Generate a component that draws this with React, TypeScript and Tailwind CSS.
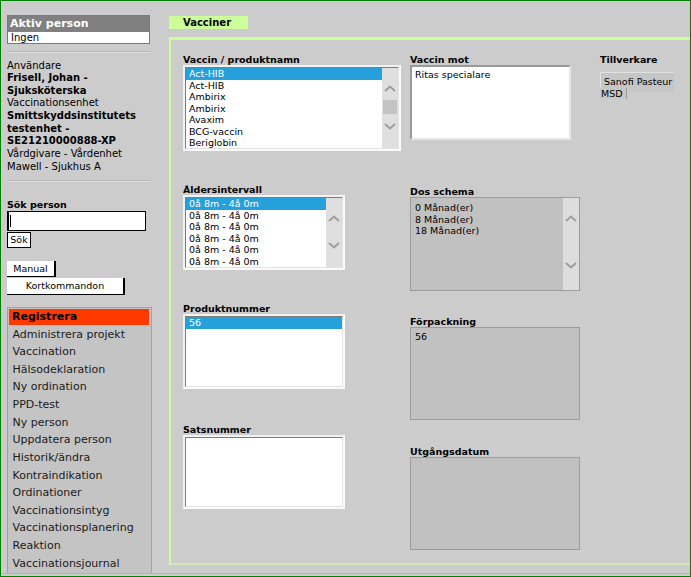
import React from "react";

function Chevron({ dir }: { dir: "up" | "down" }) {
  return (
    <svg width="12" height="7" viewBox="0 0 12 7" className="block">
      <polyline
        points={dir === "up" ? "1,6 6,1.5 11,6" : "1,1 6,5.5 11,1"}
        fill="none"
        stroke="#9c9c9c"
        strokeWidth="1.8"
      />
    </svg>
  );
}

function ListBox({
  size,
  items,
  selected = 0,
  scroll,
}: {
  size: string;
  items: string[];
  selected?: number;
  scroll?: React.ReactNode;
}) {
  return (
    <div className={`${size} border-2 border-[#f2f2f2] border-b-[#fbfbfb] border-r-[#fbfbfb]`}>
      <div className="h-full flex bg-white border border-t-[#7c7c7c] border-l-[#7c7c7c] border-b-[#e2e2e2] border-r-[#e2e2e2]">
        <div className="flex-1 text-[9.5px] leading-[11.5px] whitespace-nowrap overflow-hidden">
          {items.map((t, i) => (
            <div key={i} className={i === selected ? "bg-[#26a0da] text-white pl-[3px]" : "pl-[3px] text-black"}>
              {t}
            </div>
          ))}
        </div>
        {scroll}
      </div>
    </div>
  );
}

function Label({ children, className = "" }: { children: React.ReactNode; className?: string }) {
  return <div className={`text-[9.5px] font-bold leading-[11px] whitespace-nowrap ${className}`}>{children}</div>;
}

function GrayBox({ size, children }: { size: string; children?: React.ReactNode }) {
  return <div className={`${size} bg-[#c1c1c1] border border-[#9c9c9c] flex`}>{children}</div>;
}

const menu = [
  "Administrera projekt",
  "Vaccination",
  "Hälsodeklaration",
  "Ny ordination",
  "PPD-test",
  "Ny person",
  "Uppdatera person",
  "Historik/ändra",
  "Kontraindikation",
  "Ordinationer",
  "Vaccinationsintyg",
  "Vaccinationsplanering",
  "Reaktion",
  "Vaccinationsjournal",
];

function Sidebar() {
  return (
    <div className="w-[152px] shrink-0 pl-[6px] pt-[14px] flex flex-col">
      <div className="w-[143px] border border-[#7a7a7a]">
        <div className="h-[16px] bg-[#808080] text-white font-bold text-[11px] leading-[16px] pl-[2px]">Aktiv person</div>
        <div className="h-[11px] bg-white text-[10px] leading-[11px] pl-[3px]">Ingen</div>
      </div>
      <div className="mt-[7px] w-[143px] h-[2px] bg-[#b8b8b8] border-b border-[#dedede]" />
      <div className="mt-[6.5px] text-[10px] leading-[12.66px]">
        <div>Användare</div>
        <div className="font-bold">Frisell, Johan -</div>
        <div className="font-bold">Sjuksköterska</div>
        <div>Vaccinationsenhet</div>
        <div className="font-bold">Smittskyddsinstitutets</div>
        <div className="font-bold">testenhet -</div>
        <div className="font-bold">SE21210000888-XP</div>
        <div>Vårdgivare - Vårdenhet</div>
        <div>Mawell - Sjukhus A</div>
      </div>
      <div className="mt-[7px] w-[143px] h-[2px] bg-[#b8b8b8] border-b border-[#dedede]" />
      <div className="mt-[16.5px] text-[9.5px] font-bold leading-[12px]">Sök person</div>
      <div className="w-[139px] h-[20px] border border-black border-l-2 bg-white flex">
        <div className="ml-[1px] mt-[3px] w-px h-[12px] bg-black" />
      </div>
      <div className="mt-[1.5px] w-[24px] h-[16px] border border-black bg-white text-[9.5px] leading-[14px] text-center">
        Sök
      </div>
      <div className="mt-[13px] w-[49px] h-[16px] bg-white border-r-2 border-b border-black text-[9.5px] flex items-center justify-center">
        Manual
      </div>
      <div className="mt-[1px] w-[118px] h-[17px] bg-white border-r-2 border-b border-black text-[9.5px] flex items-center justify-center">
        Kortkommandon
      </div>
      <div className="mt-[11.5px] w-[145px] flex-1 border-t border-l border-r border-[#a2a2a2] bg-[#c4c4c4] pl-[1px] pr-[2px] text-[11px]">
        <div className="h-[17.64px] flex items-center">
          <div className="w-full h-[16px] bg-[#ff3a00] font-bold leading-[16px] pl-[3px]">Registrera</div>
        </div>
        {menu.map((m) => (
          <div key={m} className="h-[17.64px] leading-[17.64px] pl-[3.5px] text-[#1a1a1a] whitespace-nowrap">
            {m}
          </div>
        ))}
      </div>
    </div>
  );
}

function Main() {
  const ages = Array.from({ length: 6 }, () => "0å 8m - 4å 0m");
  return (
    <div className="flex-1 pl-[16px] pt-[15px] flex flex-col">
      <div className="w-[79px] h-[13px] bg-[#ccff99] text-[10px] font-bold leading-[13px] pl-[14px]">Vacciner</div>
      <div className="mt-[8px] h-[528px] border-t-[3px] border-l-2 border-b-2 border-[#ccff99] border-b-[#cfe8b8] flex pl-[12px] pt-[14px]">
        {/* column 1 */}
        <div className="w-[227px] shrink-0 flex flex-col">
          <Label>Vaccin / produktnamn</Label>
          <ListBox
            size="w-[218px] h-[86px]"
            items={["Act-HIB", "Act-HIB", "Ambirix", "Ambirix", "Avaxim", "BCG-vaccin", "Beriglobin"]}
            scroll={
              <div className="w-[16px] h-full bg-[#dfdfdf] flex flex-col items-center pt-[16.5px]">
                <Chevron dir="up" />
                <div className="mt-[8px] w-[14px] h-[14px] bg-[#c3c3c3]" />
                <div className="mt-[9.5px]">
                  <Chevron dir="down" />
                </div>
              </div>
            }
          />
          <Label className="mt-[33px]">Åldersintervall</Label>
          <ListBox
            size="w-[162px] h-[75px]"
            items={ages}
            scroll={
              <div className="w-[16px] h-full bg-[#dfdfdf] flex flex-col items-center pt-[16.5px]">
                <Chevron dir="up" />
                <div className="mt-[20px]">
                  <Chevron dir="down" />
                </div>
              </div>
            }
          />
          <Label className="mt-[33px]">Produktnummer</Label>
          <ListBox size="w-[162px] h-[75px]" items={["56"]} />
          <Label className="mt-[35px]">Satsnummer</Label>
          <ListBox size="w-[162px] h-[74px]" items={[]} />
        </div>

        {/* column 2 */}
        <div className="w-[190px] shrink-0 flex flex-col">
          <Label>Vaccin mot</Label>
          <div className="w-[161px] h-[75px] bg-white border-2 border-t-[#9a9a9a] border-l-[#9a9a9a] border-b-[#e6e6e6] border-r-[#e6e6e6] text-[9.5px] leading-[11.5px] pl-[3px] pt-[1.5px]">
            Ritas specialare
          </div>
          <Label className="mt-[46px]">Dos schema</Label>
          <GrayBox size="w-[170px] h-[94px]">
            <div className="flex-1 text-[9.5px] leading-[11.5px] pl-[4px] pt-[4px]">
              <div>0 Månad(er)</div>
              <div>8 Månad(er)</div>
              <div>18 Månad(er)</div>
            </div>
            <div className="w-[16px] h-full bg-[#dddddd] flex flex-col items-center pt-[16.5px]">
              <Chevron dir="up" />
              <div className="mt-[40px]">
                <Chevron dir="down" />
              </div>
            </div>
          </GrayBox>
          <Label className="mt-[25px]">Förpackning</Label>
          <GrayBox size="w-[170px] h-[93px]">
            <div className="flex-1 text-[9.5px] leading-[11.5px] pl-[4px] pt-[3px]">56</div>
          </GrayBox>
          <Label className="mt-[26px]">Utgångsdatum</Label>
          <GrayBox size="w-[170px] h-[93px]" />
        </div>

        {/* column 3 */}
        <div className="flex-1 flex flex-col">
          <Label>Tillverkare</Label>
          <div className="relative mt-[7px] w-[74px] h-[20px]">
            <div className="w-full h-full bg-[#c6c6c6] border-t border-l border-[#e2e2e2] border-b border-b-[#c6c6c6] overflow-hidden text-[9.5px] leading-[11px] pl-[3px] pt-[3px] whitespace-nowrap">
              Sanofi Pasteur
            </div>
            <div className="absolute left-0 top-[16px] w-[27px] h-[11px] bg-[#c6c6c6] border-r border-[#9c9c9c] text-[9.5px] leading-[11px] pl-[1px]">
              MSD
            </div>
          </div>
        </div>
      </div>
    </div>
  );
}

export default function App() {
  return (
    <div className="w-[691px] h-[577px] border border-[#008000] bg-[#cccccc] flex flex-col overflow-hidden font-['DejaVu_Sans',Verdana,sans-serif] text-black">
      <div className="flex h-[572px]">
        <Sidebar />
        <Main />
      </div>
      <div className="h-[3px] border-t border-[#b4b4b4]" />
    </div>
  );
}
